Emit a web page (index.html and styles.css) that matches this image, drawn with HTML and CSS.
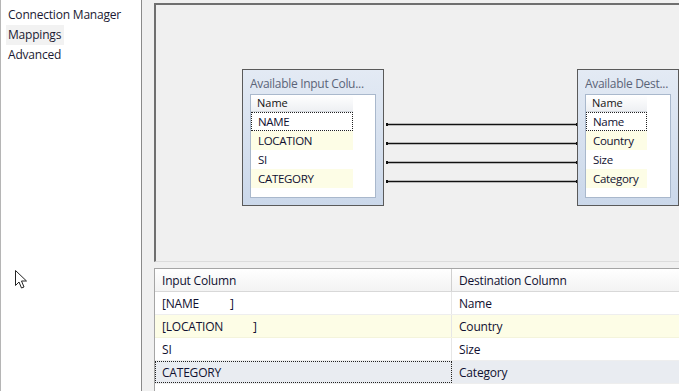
FILE: index.html
```html
<!DOCTYPE html>
<html lang="en">
<head>
  <meta charset="UTF-8">
  <title>Mappings</title>
  <link rel="stylesheet" href="styles.css">
</head>
<body>
  <div class="editor">
    <div class="nav">
      <div class="nav-item">Connection Manager</div>
      <div class="nav-item current">Mappings</div>
      <div class="nav-item">Advanced</div>
      <svg class="cursor" width="14" height="21" viewBox="0 0 14 21">
        <path d="M1.5 1.5 L1.5 16.5 L5 13 L7.5 19 L10 18 L7.5 12 L12.5 12 Z" fill="#fff" stroke="#222" stroke-width="1" stroke-linejoin="round"/>
      </svg>
    </div>

    <div class="main">
      <div class="diagram">
        <svg class="links" width="525" height="259">
          <g stroke="#111" stroke-width="1.4">
            <line x1="230" y1="119.5" x2="423" y2="119.5"/>
            <line x1="230" y1="138.5" x2="423" y2="138.5"/>
            <line x1="230" y1="157.5" x2="423" y2="157.5"/>
            <line x1="230" y1="176.5" x2="423" y2="176.5"/>
          </g>
          <g fill="#111">
            <rect x="230" y="118" width="2" height="3"/>
            <rect x="230" y="137" width="2" height="3"/>
            <rect x="230" y="156" width="2" height="3"/>
            <rect x="230" y="175" width="2" height="3"/>
            <rect x="420" y="118" width="3" height="3"/>
            <rect x="420" y="137" width="3" height="3"/>
            <rect x="420" y="156" width="3" height="3"/>
            <rect x="420" y="175" width="3" height="3"/>
          </g>
        </svg>

        <div class="table-box input-box">
          <div class="box-title">Available Input Colu...</div>
          <div class="box-list">
            <div class="list-head">Name</div>
            <div class="list-row focus">NAME</div>
            <div class="list-row alt">LOCATION</div>
            <div class="list-row">SI</div>
            <div class="list-row alt">CATEGORY</div>
          </div>
        </div>

        <div class="table-box dest-box">
          <div class="box-title">Available Dest...</div>
          <div class="box-list">
            <div class="list-head">Name</div>
            <div class="list-row focus">Name</div>
            <div class="list-row alt">Country</div>
            <div class="list-row">Size</div>
            <div class="list-row alt">Category</div>
          </div>
        </div>
      </div>

      <div class="grid">
        <div class="grid-row grid-head">
          <div class="cell">Input Column</div>
          <div class="cell">Destination Column</div>
        </div>
        <div class="grid-row">
          <div class="cell"><span class="col-name">[NAME</span>]</div>
          <div class="cell">Name</div>
        </div>
        <div class="grid-row alt">
          <div class="cell"><span class="col-name wide">[LOCATION</span>]</div>
          <div class="cell">Country</div>
        </div>
        <div class="grid-row">
          <div class="cell">SI</div>
          <div class="cell">Size</div>
        </div>
        <div class="grid-row selected">
          <div class="cell focus">CATEGORY</div>
          <div class="cell">Category</div>
        </div>
      </div>
    </div>
  </div>
</body>
</html>
```

FILE: styles.css
```css
body {
  margin: 0;
  width: 679px;
  height: 391px;
  overflow: hidden;
  background: #f0f0f0;
  font-family: "Open Sans", "Noto Sans", sans-serif;
  font-size: 12px;
  color: #111;
}

.editor {
  display: flex;
  height: 391px;
}

.nav {
  position: relative;
  width: 142px;
  background: white;
  border-left: 1px solid #b5b5b5;
  border-right: 1px solid #8a8a8a;
  padding-top: 5px;
  box-sizing: border-box;
}

.nav-item {
  height: 20px;
  line-height: 20px;
  padding-left: 7px;
  letter-spacing: -0.2px;
  color: #1a1a33;
}

.nav-item.current {
  display: inline-block;
  margin-left: 5px;
  padding: 0 3px 0 2px;
  background: #f2f2f2;
}

.cursor {
  position: absolute;
  left: 13px;
  top: 269px;
}

.main {
  flex: 1;
  margin-left: 12px;
  display: flex;
  flex-direction: column;
  gap: 6px;
  padding-top: 3px;
}

.diagram {
  position: relative;
  height: 259px;
  box-sizing: border-box;
  border-top: 2px solid #6f6f6f;
  border-left: 2px solid #6f6f6f;
  border-bottom: 1px solid #dcdcdc;
  background: #f0f0f0;
}

.links {
  position: absolute;
  left: 0;
  top: 0;
}

.table-box {
  position: absolute;
  top: 64px;
  height: 137px;
  box-sizing: border-box;
  border: 1px solid #5a5a5a;
  background: linear-gradient(#e3eaf4, #cbd8ea);
  padding: 0 7px 7px 7px;
}

.input-box {
  left: 86px;
  width: 142px;
}

.dest-box {
  left: 421px;
  width: 102px;
}

.box-title {
  height: 24px;
  line-height: 28px;
  white-space: nowrap;
  overflow: hidden;
  color: #5b6478;
  font-size: 12px;
  letter-spacing: -0.3px;
}

.box-list {
  height: 104px;
  box-sizing: border-box;
  background: white;
  border: 1px solid #a9b8cc;
  padding-right: 22px;
}

.dest-box .box-list {
  padding-right: 23px;
}

.list-head {
  height: 17px;
  line-height: 16px;
  padding-left: 6px;
  font-size: 11px;
  box-sizing: border-box;
  background: linear-gradient(#ffffff, #eef0f3);
  border-bottom: 1px solid #d5d9df;
}

.list-row {
  height: 19px;
  line-height: 19px;
  padding-left: 7px;
  font-size: 11.5px;
  letter-spacing: -0.3px;
  box-sizing: border-box;
  color: #101030;
}

.list-row.alt {
  background: #fdfde6;
}

.list-row.focus {
  outline: 1px dotted #222;
  outline-offset: -1px;
}

.grid {
  flex: 1;
  background: white;
  border-top: 1px solid #a5a5a5;
  border-left: 1px solid #a5a5a5;
}

.grid-row {
  display: flex;
  height: 23px;
  border-bottom: 1px solid #eeeeee;
  box-sizing: border-box;
}

.grid-row.alt {
  background: #fdfde6;
  border-bottom-color: #f4f4dc;
}

.grid-row.selected {
  background: #e9ecf1;
}

.cell {
  line-height: 23px;
  padding-left: 7px;
  letter-spacing: -0.2px;
  color: #101030;
  box-sizing: border-box;
}

.cell:first-child {
  width: 297px;
  border-right: 1px solid #e6e6e6;
}

.grid-head {
  height: 23px;
  background: linear-gradient(#ffffff, #f3f3f3);
  border-bottom: 1px solid #d8d8d8;
}

.grid-head .cell {
  line-height: 24px;
}

.grid-head .cell:first-child {
  border-right: 1px solid #d0d0d0;
}

.cell.focus {
  outline: 1px dotted #222;
  outline-offset: -1px;
}

.col-name {
  display: inline-block;
  width: 68px;
}

.col-name.wide {
  width: 91px;
}
```
